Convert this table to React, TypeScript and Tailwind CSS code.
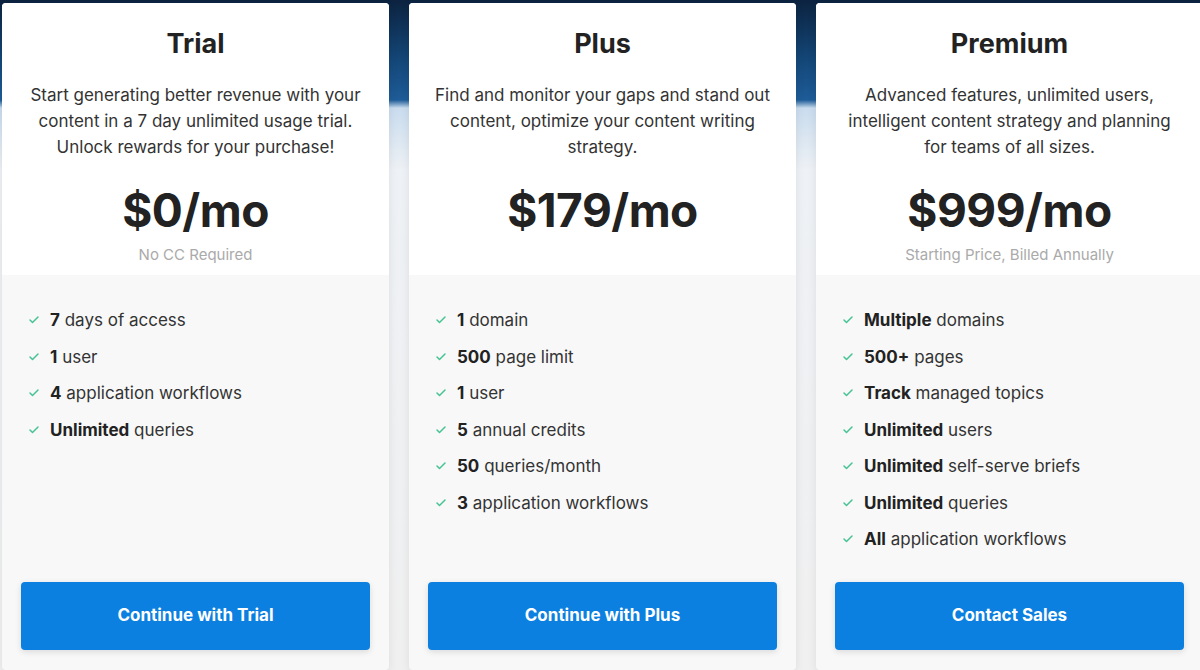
import { Check } from 'lucide-react';

interface Feature {
  bold: string;
  rest: string;
}

interface Plan {
  name: string;
  description: string;
  price: string;
  note: string;
  features: Feature[];
  cta: string;
}

const plans: Plan[] = [
  {
    name: 'Trial',
    description:
      'Start generating better revenue with your content in a 7 day unlimited usage trial. Unlock rewards for your purchase!',
    price: '$0/mo',
    note: 'No CC Required',
    features: [
      { bold: '7', rest: 'days of access' },
      { bold: '1', rest: 'user' },
      { bold: '4', rest: 'application workflows' },
      { bold: 'Unlimited', rest: 'queries' },
    ],
    cta: 'Continue with Trial',
  },
  {
    name: 'Plus',
    description:
      'Find and monitor your gaps and stand out content, optimize your content writing strategy.',
    price: '$179/mo',
    note: '',
    features: [
      { bold: '1', rest: 'domain' },
      { bold: '500', rest: 'page limit' },
      { bold: '1', rest: 'user' },
      { bold: '5', rest: 'annual credits' },
      { bold: '50', rest: 'queries/month' },
      { bold: '3', rest: 'application workflows' },
    ],
    cta: 'Continue with Plus',
  },
  {
    name: 'Premium',
    description:
      'Advanced features, unlimited users, intelligent content strategy and planning for teams of all sizes.',
    price: '$999/mo',
    note: 'Starting Price, Billed Annually',
    features: [
      { bold: 'Multiple', rest: 'domains' },
      { bold: '500+', rest: 'pages' },
      { bold: 'Track', rest: 'managed topics' },
      { bold: 'Unlimited', rest: 'users' },
      { bold: 'Unlimited', rest: 'self-serve briefs' },
      { bold: 'Unlimited', rest: 'queries' },
      { bold: 'All', rest: 'application workflows' },
    ],
    cta: 'Contact Sales',
  },
];

const PlanCard = ({ plan }: { plan: Plan }) => (
  <div className="flex h-[667px] w-[387px] shrink-0 flex-col overflow-hidden rounded-[4px] bg-[#f8f8f8] shadow-[0_2px_10px_rgba(0,0,0,0.08)]">
    {/* 头部 */}
    <div className="flex h-[272px] flex-col items-center bg-white px-6 pt-[25px] text-center">
      <h2 className="text-[27px] font-bold leading-[32px] text-[#222]">{plan.name}</h2>
      <p className="mt-[22px] h-[78px] text-[17px] leading-[26px] text-[#333]">{plan.description}</p>
      <div className="mt-[22px] text-[46px] font-bold leading-[56px] tracking-[-0.5px] text-[#222]">
        {plan.price}
      </div>
      <div className="mt-[7px] text-[15px] leading-[20px] text-[#aaa]">{plan.note}</div>
    </div>

    {/* 功能列表 */}
    <ul className="flex flex-col gap-[10.5px] pl-[26px] pt-[32px]">
      {plan.features.map((f, i) => (
        <li key={i} className="flex items-center text-[17px] leading-[26px] text-[#333]">
          <Check className="mr-[10px] h-[12px] w-[12px] text-[#45c393]" strokeWidth={3} />
          <span>
            <b className="font-bold text-[#222]">{f.bold}</b> {f.rest}
          </span>
        </li>
      ))}
    </ul>

    {/* 按钮 */}
    <div className="mt-auto px-[19px] pb-[20px]">
      <button className="flex h-[68px] w-full items-center justify-center rounded-[4px] bg-[#0b80e0] text-[17px] font-bold text-white shadow-[0_2px_6px_rgba(0,0,0,0.12)]">
        {plan.cta}
      </button>
    </div>
  </div>
);

const App = () => (
  <div
    className="flex h-[670px] w-[1200px] gap-[20px] overflow-hidden bg-[linear-gradient(180deg,#0c2340_0px,#144778_60px,#1e5c98_100px,#c9dcee_108px,#eef1f5_170px,#f0f0f0_100%)] pl-[2px] pt-[3px]"
    style={{ fontFamily: 'Inter, "Noto Sans", sans-serif' }}
  >
    {plans.map((p) => (
      <PlanCard key={p.name} plan={p} />
    ))}
  </div>
);

export default App;
